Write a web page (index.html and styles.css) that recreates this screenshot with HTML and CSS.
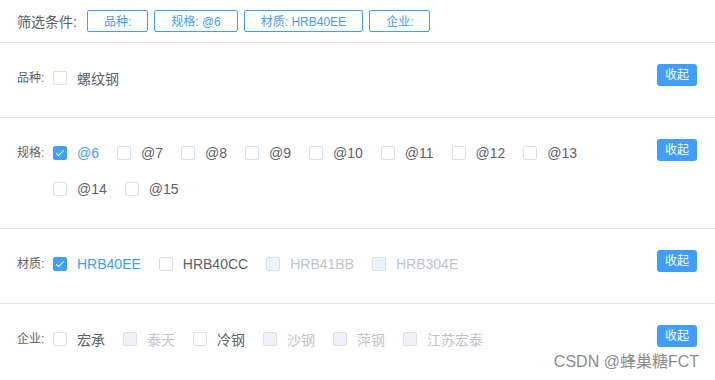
FILE: index.html
```html
<!DOCTYPE html>
<html lang="zh-CN">
<head>
<meta charset="utf-8">
<link rel="stylesheet" href="styles.css">
</head>
<body>
<div class="page">
  <div class="filter-bar">
    <span class="filter-title">筛选条件:</span>
    <span class="tag">品种:</span>
    <span class="tag">规格: @6</span>
    <span class="tag">材质: HRB40EE</span>
    <span class="tag">企业:</span>
  </div>

  <div class="section">
    <span class="sec-label">品种:</span>
    <div class="group">
      <label class="cb"><span class="box"></span><span class="txt">螺纹钢</span></label>
    </div>
    <button class="fold">收起</button>
  </div>

  <div class="section">
    <span class="sec-label">规格:</span>
    <div class="group">
      <label class="cb checked"><span class="box"></span><span class="txt">@6</span></label>
      <label class="cb"><span class="box"></span><span class="txt">@7</span></label>
      <label class="cb"><span class="box"></span><span class="txt">@8</span></label>
      <label class="cb"><span class="box"></span><span class="txt">@9</span></label>
      <label class="cb"><span class="box"></span><span class="txt">@10</span></label>
      <label class="cb"><span class="box"></span><span class="txt">@11</span></label>
      <label class="cb"><span class="box"></span><span class="txt">@12</span></label>
      <label class="cb"><span class="box"></span><span class="txt">@13</span></label>
      <label class="cb"><span class="box"></span><span class="txt">@14</span></label>
      <label class="cb"><span class="box"></span><span class="txt">@15</span></label>
    </div>
    <button class="fold">收起</button>
  </div>

  <div class="section">
    <span class="sec-label">材质:</span>
    <div class="group">
      <label class="cb checked"><span class="box"></span><span class="txt">HRB40EE</span></label>
      <label class="cb"><span class="box"></span><span class="txt">HRB40CC</span></label>
      <label class="cb disabled"><span class="box"></span><span class="txt">HRB41BB</span></label>
      <label class="cb disabled"><span class="box"></span><span class="txt">HRB304E</span></label>
    </div>
    <button class="fold">收起</button>
  </div>

  <div class="section last">
    <span class="sec-label">企业:</span>
    <div class="group">
      <label class="cb"><span class="box"></span><span class="txt">宏承</span></label>
      <label class="cb disabled"><span class="box"></span><span class="txt">泰天</span></label>
      <label class="cb"><span class="box"></span><span class="txt">冷钢</span></label>
      <label class="cb disabled"><span class="box"></span><span class="txt">沙钢</span></label>
      <label class="cb disabled"><span class="box"></span><span class="txt">萍钢</span></label>
      <label class="cb disabled"><span class="box"></span><span class="txt">江苏宏泰</span></label>
    </div>
    <button class="fold">收起</button>
  </div>

  <div class="watermark">CSDN @蜂巢糖FCT</div>
</div>
</body>
</html>
```

FILE: styles.css
```css
* { box-sizing: border-box; }

html, body {
  margin: 0;
  padding: 0;
  background: #ffffff;
}

body {
  font-family: "Liberation Sans", Arial, "Noto Sans CJK SC", sans-serif;
  color: #606266;
}

.page {
  position: relative;
  width: 715px;
  height: 380px;
  overflow: hidden;
}

.filter-bar {
  display: flex;
  align-items: center;
  gap: 6px;
  height: 43px;
  padding: 0 0 1px 17px;
  border-bottom: 1px solid #e4e4ee;
}

.filter-title {
  font-size: 14px;
  color: #606266;
  margin-right: 4px;
}

.tag {
  display: inline-flex;
  align-items: center;
  height: 22px;
  padding: 0 16px;
  border: 1px solid #409eff;
  border-radius: 2px;
  font-size: 12px;
  color: #409eff;
  background: #fff;
  white-space: nowrap;
}

.section {
  display: flex;
  align-items: flex-start;
  padding: 17px 18px 21px 17px;
  border-bottom: 1px solid #e4e4ee;
}

.section.last {
  border-bottom: none;
}

.sec-label {
  flex: 0 0 36px;
  font-size: 12px;
  line-height: 36px;
  color: #606266;
}

.group {
  flex: 1;
  display: flex;
  flex-wrap: wrap;
  padding-right: 40px;
}

.cb {
  display: inline-flex;
  align-items: center;
  height: 36px;
  margin-right: 18px;
  font-size: 14px;
  color: #606266;
  white-space: nowrap;
}

.box {
  position: relative;
  width: 14px;
  height: 14px;
  border: 1px solid #dcdfe6;
  border-radius: 2px;
  background: #fff;
  margin-right: 10px;
  flex-shrink: 0;
}

.cb.checked .box {
  background: #409eff;
  border-color: #409eff;
}

.cb.checked .box::after {
  content: "";
  position: absolute;
  left: 4px;
  top: 1px;
  width: 3px;
  height: 7px;
  border: 1px solid #fff;
  border-left: 0;
  border-top: 0;
  transform: rotate(45deg);
}

.cb.checked .txt {
  color: #409eff;
}

.cb.disabled .box {
  background: #edf2fc;
  border-color: #dcdfe6;
}

.cb.disabled .txt {
  color: #c0c4cc;
}

.fold {
  flex-shrink: 0;
  margin-top: 4px;
  width: 40px;
  height: 22px;
  padding: 0;
  border: none;
  border-radius: 3px;
  background: #409eff;
  color: #fff;
  font-family: "Liberation Sans", Arial, "Noto Sans CJK SC", sans-serif;
  font-size: 12px;
  line-height: 22px;
  cursor: pointer;
}

.watermark {
  position: absolute;
  right: 16px;
  bottom: 8px;
  font-size: 16px;
  color: #8c8c8c;
  line-height: 20px;
}
```
